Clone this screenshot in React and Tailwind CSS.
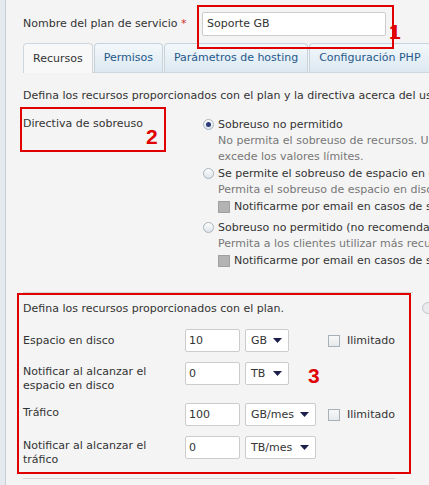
import React from "react";

const font = { fontFamily: '"DejaVu Sans", Verdana, sans-serif' };

function Radio({ checked }) {
  return (
    <span className="relative inline-block w-[11px] h-[11px] rounded-full border border-[#a9b4bd] bg-gradient-to-b from-[#ffffff] to-[#dde4ea] shrink-0 mt-[2px]">
      {checked && (
        <span className="absolute left-[2px] top-[2px] w-[5px] h-[5px] rounded-full bg-[#2a3a7a]" />
      )}
    </span>
  );
}

function GrayCheck() {
  return <span className="inline-block w-[12px] h-[12px] bg-[#b3b3b3] border border-[#a0a0a0] shrink-0" />;
}

function Checkbox() {
  return <span className="inline-block w-[12px] h-[12px] bg-gradient-to-b from-[#f8f8f8] to-[#e6e9ec] border border-[#a8b0b8] shrink-0" />;
}

function TextInput({ value }) {
  return (
    <div className="w-[55px] h-[23px] bg-white border border-[#cccccc] rounded-[2px] px-[3px] flex items-center text-[#333]">
      {value}
    </div>
  );
}

function Select({ value, w }) {
  return (
    <div className={`${w} h-[23px] bg-white border border-[#cccccc] rounded-[2px] pl-[5px] pr-[6px] flex items-center justify-between text-[#333]`}>
      <span>{value}</span>
      <svg width="9" height="5" viewBox="0 0 9 5"><path d="M0 0H9L4.5 5Z" fill="#1c1f4a" /></svg>
    </div>
  );
}

function Tab({ children, active }) {
  return active ? (
    <div className="h-[30px] px-[9px] flex items-center border border-b-0 border-[#cfd6dc] rounded-t-[4px] bg-[#f8f8f8] text-[#333] relative z-10 -mb-[1px]">
      {children}
    </div>
  ) : (
    <div className="h-[29px] px-[9px] flex items-center border border-b-0 border-[#c6d3dd] rounded-t-[4px] bg-gradient-to-b from-[#f3f8fb] to-[#dce8f1] text-[#24598a]">
      {children}
    </div>
  );
}

export default function App() {
  return (
    <div className="w-[429px] h-[485px] flex bg-[#f4f4f4] overflow-hidden text-[11px] leading-[14px]" style={font}>
      <div className="w-[6px] shrink-0 bg-[#e5eaee] border-r border-[#c8ced4]" />
      <div className="relative flex-1 min-w-0 overflow-hidden pl-[17px] pt-[12px]">
        {/* Row 1 */}
        <div className="flex items-center h-[23px]">
          <div className="w-[179px] shrink-0 text-[#333]">
            Nombre del plan de servicio <span className="text-[#d32f2f]">*</span>
          </div>
          <div className="w-[184px] shrink-0 h-[24px] bg-white border border-[#cccccc] rounded-[2px] px-[4px] flex items-center text-[#333]">
            Soporte GB
          </div>
        </div>

        {/* Tabs */}
        <div className="mt-[8px] flex items-end gap-[1px] border-b border-[#cfd6dc] w-[420px]">
          <Tab active>Recursos</Tab>
          <Tab>Permisos</Tab>
          <Tab>Parámetros de hosting</Tab>
          <Tab>Configuración PHP</Tab>
        </div>

        <div className="mt-[16px] whitespace-nowrap text-[#333]">
          Defina los recursos proporcionados con el plan y la directiva acerca del uso de recursos.
        </div>

        {/* Directive */}
        <div className="mt-[14px] flex">
          <div className="w-[180px] shrink-0 text-[#333]">Directiva de sobreuso</div>
          <div className="flex flex-col whitespace-nowrap shrink-0">
            <div className="flex gap-[4px]">
              <Radio checked />
              <div className="leading-[16px]">
                <div className="text-[#333]">Sobreuso no permitido</div>
                <div className="text-[#777]">No permita el sobreuso de recursos. Un</div>
                <div className="text-[#777]">excede los valores límites.</div>
              </div>
            </div>
            <div className="flex gap-[4px] mt-[1px]">
              <Radio />
              <div className="leading-[16px]">
                <div className="text-[#333]">Se permite el sobreuso de espacio en disco</div>
                <div className="text-[#777]">Permita el sobreuso de espacio en disco</div>
                <div className="flex items-center gap-[4px] h-[18px] text-[#333]">
                  <GrayCheck />
                  Notificarme por email en casos de sobreuso
                </div>
              </div>
            </div>
            <div className="flex gap-[4px] mt-[4px]">
              <Radio />
              <div className="leading-[16px]">
                <div className="text-[#333]">Sobreuso no permitido (no recomendado)</div>
                <div className="text-[#777]">Permita a los clientes utilizar más recursos</div>
                <div className="flex items-center gap-[4px] h-[18px] text-[#333]">
                  <GrayCheck />
                  Notificarme por email en casos de sobreuso
                </div>
              </div>
            </div>
          </div>
        </div>

        {/* Separator */}
        <div className="mt-[22px] w-[390px] border-t border-[#d6d6d6]" />

        {/* Resources */}
        <div className="pt-[9px] text-[#333]">
          <div>Defina los recursos proporcionados con el plan.</div>
          <div className="mt-[13px] flex flex-col gap-[10px]">
            <div className="flex items-center">
              <div className="w-[162px] shrink-0">Espacio en disco</div>
              <div className="w-[143px] shrink-0 flex gap-[5px]">
                <TextInput value="10" />
                <Select value="GB" w="w-[44px]" />
              </div>
              <div className="flex items-center gap-[7px]"><Checkbox />Ilimitado</div>
            </div>
            <div className="flex items-start">
              <div className="w-[162px] shrink-0 pt-[3px]">Notificar al alcanzar el<br />espacio en disco</div>
              <div className="w-[143px] shrink-0 flex gap-[5px]">
                <TextInput value="0" />
                <Select value="TB" w="w-[44px]" />
              </div>
            </div>
            <div className="flex items-center">
              <div className="w-[162px] shrink-0 -mt-[3px]">Tráfico</div>
              <div className="w-[143px] shrink-0 flex gap-[5px]">
                <TextInput value="100" />
                <Select value="GB/mes" w="w-[71px]" />
              </div>
              <div className="flex items-center gap-[7px]"><Checkbox />Ilimitado</div>
            </div>
            <div className="flex items-start">
              <div className="w-[162px] shrink-0 pt-[3px]">Notificar al alcanzar el<br />tráfico</div>
              <div className="w-[143px] shrink-0 flex gap-[5px]">
                <TextInput value="0" />
                <Select value="TB/mes" w="w-[71px]" />
              </div>
            </div>
          </div>
        </div>

        <div className="mt-[11px] w-[372px] border-t border-[#d6d6d6]" />

        {/* Annotations */}
        <div className="absolute left-[191px] top-[5px] w-[197px] h-[44px] border-2 border-[#e00000]" />
        <div className="absolute left-[383px] top-[21px] text-[#e00000] font-bold text-[21px] leading-[21px]" style={{ fontFamily: '"Liberation Sans", Arial, sans-serif' }}>1</div>
        <div className="absolute left-[14px] top-[107px] w-[146px] h-[45px] border-2 border-[#e00000]" />
        <div className="absolute left-[140px] top-[126px] text-[#e00000] font-bold text-[21px] leading-[21px]" style={{ fontFamily: '"Liberation Sans", Arial, sans-serif' }}>2</div>
        <div className="absolute left-[11px] top-[293px] w-[394px] h-[181px] border-2 border-[#e00000]" />
        <div className="absolute left-[302px] top-[365px] text-[#e00000] font-bold text-[21px] leading-[21px]" style={{ fontFamily: '"Liberation Sans", Arial, sans-serif' }}>3</div>
        <div className="absolute left-[416px] top-[302px] w-[12px] h-[12px] rounded-full border border-[#c4c8cc] bg-[#e8eaec]" />
      </div>
    </div>
  );
}
